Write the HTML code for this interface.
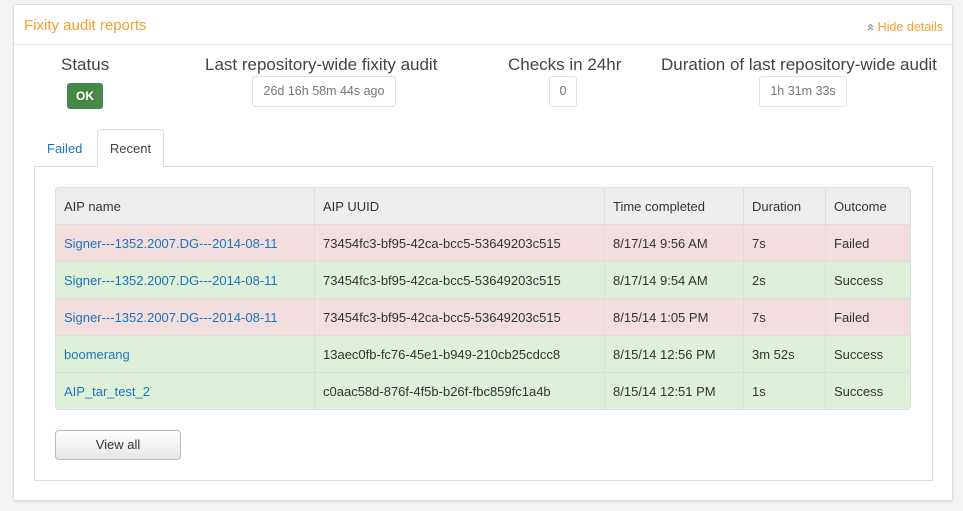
<!DOCTYPE html>
<html><head><meta charset="utf-8"><style>
*{box-sizing:border-box;margin:0;padding:0}
body{width:963px;height:511px;background:#f3f3f3;font-family:"Liberation Sans",sans-serif;color:#333;position:relative;overflow:hidden}
.panel{position:absolute;left:13px;top:4px;width:940px;height:497px;background:#fff;border:1px solid #ddd;border-radius:3px;box-shadow:0 1px 2px rgba(0,0,0,.08)}
.hdr{position:absolute;left:0;top:0;width:100%;height:40px;border-bottom:1px solid #e8e8e8}
.title{position:absolute;left:10px;top:12px;font-size:15px;color:#f6a02d}
.hide{position:absolute;right:9px;top:15px;font-size:12.5px;color:#f6a02d}
.hide svg{margin-right:4px;vertical-align:0}
.stat{position:absolute;top:50px;text-align:center;font-size:17px;color:#444;white-space:nowrap}
.box{position:absolute;border:1px solid #e3e3e3;border-radius:3px;font-size:12.5px;color:#777;text-align:center;line-height:29px;height:31px}
.ok{position:absolute;left:53px;top:78px;width:36px;height:26px;background:#468847;color:#fff;font-weight:bold;font-size:12px;text-align:center;line-height:26px;border-radius:3px}
.tab{position:absolute;font-size:13px}
.content{position:absolute;left:20px;top:161px;width:899px;height:315px;border:1px solid #ddd}
table{position:absolute;left:20px;top:20px;width:856px;border-collapse:separate;border-spacing:0;border:1px solid #ddd;border-radius:4px;overflow:hidden;font-size:13px}
td,th{height:37px;padding:0 8px;text-align:left;font-weight:normal;border-top:1px solid #ddd;border-left:1px solid #ddd;white-space:nowrap}
th{border-top:none;background:#eee;height:36px}
tr td:first-child,tr th:first-child{border-left:none}
.f td{background:#f2dede}.s td{background:#dff0d8}
a{color:#1a75bb;text-decoration:none}
.btn{position:absolute;left:20px;top:263px;width:126px;height:30px;border:1px solid #bbb;border-radius:4px;background:linear-gradient(#fff,#e6e6e6);font-size:13px;text-align:center;line-height:28px;color:#333}
</style></head><body>
<div class="panel">
<div class="hdr"><div class="title">Fixity audit reports</div><div class="hide"><svg width="7" height="8" viewBox="0 0 7 8"><path d="M1 4L3.5 1.5L6 4M1 7L3.5 4.5L6 7" fill="none" stroke="#999" stroke-width="1.3"/></svg>Hide details</div></div>
<div class="stat" style="left:47px">Status</div>
<div class="ok">OK</div>
<div class="stat" style="left:191px">Last repository-wide fixity audit</div>
<div class="box" style="left:238px;top:71px;width:144px">26d 16h 58m 44s ago</div>
<div class="stat" style="left:494px">Checks in 24hr</div>
<div class="box" style="left:535px;top:71px;width:28px">0</div>
<div class="stat" style="left:647px">Duration of last repository-wide audit</div>
<div class="box" style="left:745px;top:71px;width:88px">1h 31m 33s</div>
<div class="tab" style="left:33px;top:136px;color:#1a75bb">Failed</div>
<div class="tab" style="left:83px;top:124px;width:67px;height:38px;border:1px solid #ddd;border-bottom:none;border-radius:4px 4px 0 0;background:#fff;z-index:2;text-align:center;line-height:37px;color:#444">Recent</div>
<div class="content">
<table>
<tr><th style="width:258px">AIP name</th><th style="width:290px">AIP UUID</th><th style="width:139px">Time completed</th><th style="width:82px">Duration</th><th>Outcome</th></tr>
<tr class="f"><td><a>Signer---1352.2007.DG---2014-08-11</a></td><td>73454fc3-bf95-42ca-bcc5-53649203c515</td><td>8/17/14 9:56 AM</td><td>7s</td><td>Failed</td></tr>
<tr class="s"><td><a>Signer---1352.2007.DG---2014-08-11</a></td><td>73454fc3-bf95-42ca-bcc5-53649203c515</td><td>8/17/14 9:54 AM</td><td>2s</td><td>Success</td></tr>
<tr class="f"><td><a>Signer---1352.2007.DG---2014-08-11</a></td><td>73454fc3-bf95-42ca-bcc5-53649203c515</td><td>8/15/14 1:05 PM</td><td>7s</td><td>Failed</td></tr>
<tr class="s"><td><a>boomerang</a></td><td>13aec0fb-fc76-45e1-b949-210cb25cdcc8</td><td>8/15/14 12:56 PM</td><td>3m 52s</td><td>Success</td></tr>
<tr class="s"><td><a>AIP_tar_test_2</a></td><td>c0aac58d-876f-4f5b-b26f-fbc859fc1a4b</td><td>8/15/14 12:51 PM</td><td>1s</td><td>Success</td></tr>
</table>
<div class="btn">View all</div>
</div>
</div>
</body></html>
